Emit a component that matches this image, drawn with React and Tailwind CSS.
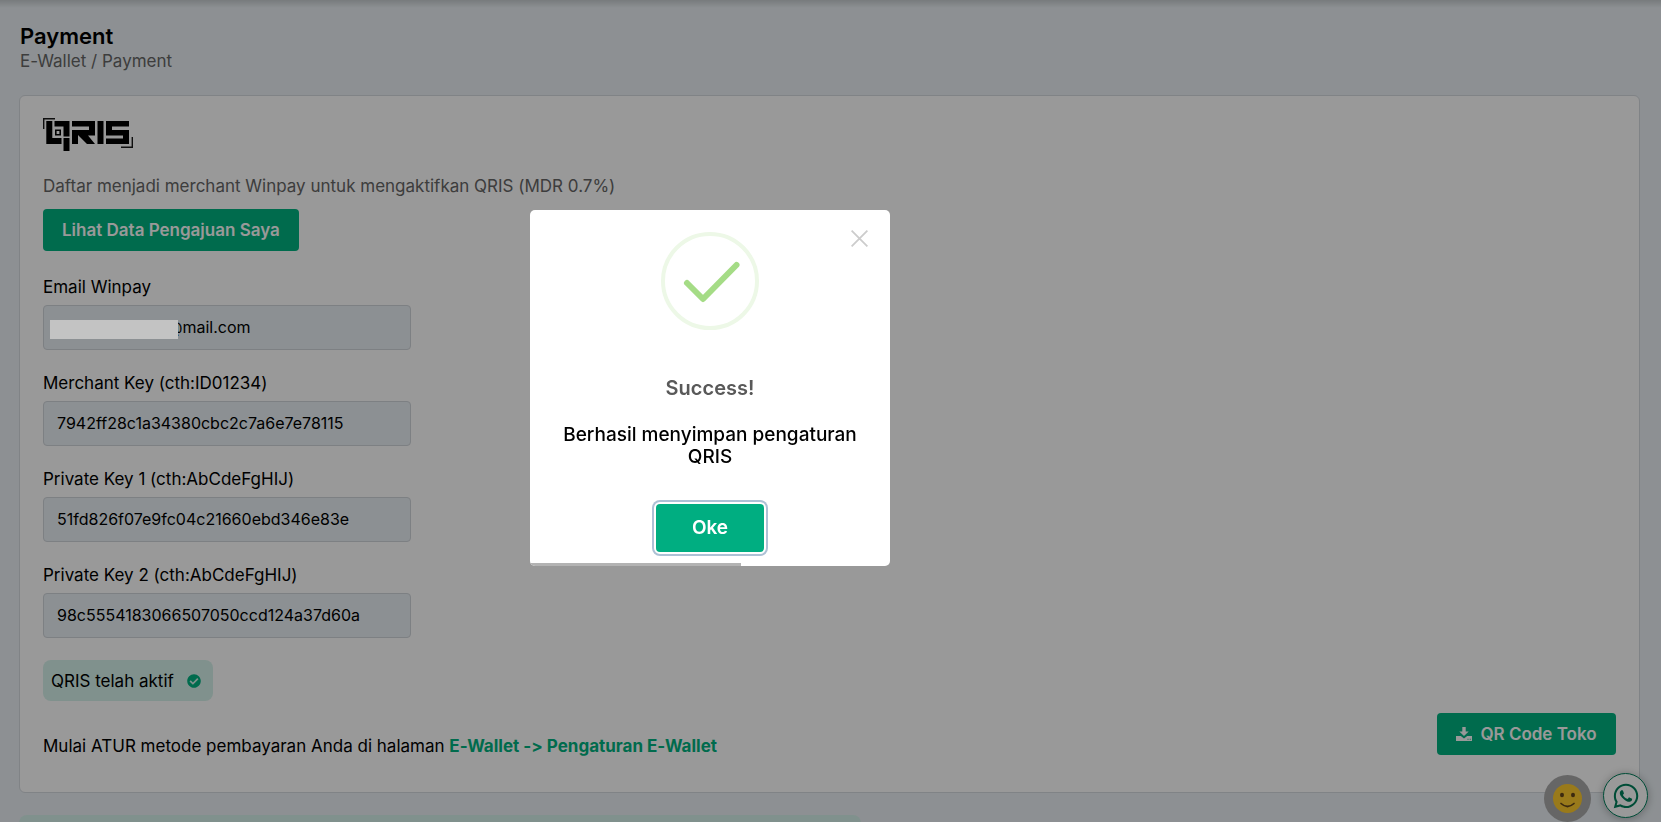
import React, { useState } from 'react';
import { FaCheckCircle, FaWhatsapp } from 'react-icons/fa';

const FIELDS = [
  { id: 'email', label: 'Email Winpay', value: '@mail.com' },
  { id: 'merchant', label: 'Merchant Key (cth:ID01234)', value: '7942ff28c1a34380cbc2c7a6e7e78115' },
  { id: 'key1', label: 'Private Key 1 (cth:AbCdeFgHIJ)', value: '51fd826f07e9fc04c21660ebd346e83e' },
  { id: 'key2', label: 'Private Key 2 (cth:AbCdeFgHIJ)', value: '98c5554183066507050ccd124a37d60a' },
];

const QrisLogo = () => (
  <svg width="90" height="34" viewBox="0 0 90 34" aria-label="QRIS" role="img">
    <path d="M.7 11V.7H12M78 29.300h11.300V19" fill="none" stroke="#1a1a1a" strokeWidth="1.4" />
    <path d="M3.300 3h6v17H18.500v6H3.300z" />
    <path d="M11.500 3h15v15.500h-6V8.500h-9z" />
    <path d="M20.500 20h6V33h-6z" />
    <path d="M12.800 12.300h4.400v4.400h-4.400z" fill="none" stroke="#000" strokeWidth="1.6" />
    <path d="M29 3h23v14.500h-7l7 8.500h-8l-9-9v9h-6V12h17V8.500H29z" />
    <path d="M54.500 3h6v23h-6z" />
    <path d="M63 3h23v5.500H69V12h17v14H63V20.500h17v-3H63z" />
  </svg>
);

const DownloadIcon = () => (
  <svg width="16" height="14" viewBox="0 0 16 14" fill="currentColor" aria-hidden="true">
    <path d="M6.300 0h3.400v4.500h3L8 9 3.300 4.500h3z" />
    <path d="M0 9h4.800L8 11.500 11.200 9H16v5H0zM11.500 11.700v1h1v-1zM13.700 11.700v1h1v-1z" fillRule="evenodd" />
  </svg>
);

const Smiley = () => (
  <svg width="29" height="29" viewBox="0 0 29 29" aria-hidden="true">
    <circle cx="14.500" cy="14.500" r="14.500" fill="#ffcb2e" />
    <ellipse cx="9" cy="11" rx="2" ry="2.200" fill="#65471b" />
    <ellipse cx="20" cy="11" rx="2" ry="2.200" fill="#65471b" />
    <path d="M8 19.500q6.500 6 13 0" fill="none" stroke="#65471b" strokeWidth="1.700" strokeLinecap="round" />
  </svg>
);

const SuccessModal = ({ onClose }) => (
  <div className="fixed inset-0 z-20 flex items-center justify-center bg-black/40 pr-[241px] pb-[46px]">
    <div role="dialog" aria-labelledby="modal-title" className="relative flex w-[360px] flex-col items-center overflow-hidden rounded-[5px] bg-white pt-[22px] pb-[14px]">
      <button type="button" aria-label="Close" onClick={onClose} className="absolute top-5 right-[22px]">
        <svg width="17" height="17" viewBox="0 0 17 17" stroke="#ccc" strokeWidth="1.800">
          <path d="M.6.6l15.800 15.800M16.400.6L.6 16.400" />
        </svg>
      </button>

      <svg width="98" height="98" viewBox="0 0 98 98" fill="none" aria-hidden="true">
        <circle cx="49" cy="49" r="47" stroke="#edf8e7" strokeWidth="4" />
        <path d="M26 51l16 16 33.500-34" stroke="#a5dc86" strokeWidth="6" strokeLinecap="round" strokeLinejoin="round" />
      </svg>

      <h2 id="modal-title" className="mt-11 text-xl leading-7 font-semibold text-[#595959]">Success!</h2>
      <p className="mt-[22px] px-5 text-center text-[19px] leading-[22px] font-medium text-black">
        Berhasil menyimpan pengaturan QRIS
      </p>
      <button
        type="button"
        onClick={onClose}
        className="mt-9 h-12 w-[108px] rounded bg-[#00ae81] text-[19px] font-semibold text-white shadow-[0_0_0_2px_#fff,0_0_0_4px_#adc1d5]"
      >
        Oke
      </button>

      <div className="absolute bottom-0 left-0 h-[3px] w-[211px] bg-[#b3b3b3]"></div>
    </div>
  </div>
);

const App = () => {
  const [showModal, setShowModal] = useState(true);

  return (
    <div className="h-screen overflow-hidden bg-[#ebf1f5] font-['Inter',sans-serif] text-[17px] leading-6 text-black [font-feature-settings:'calt'_0]">
      {/* Shadow of the top bar */}
      <div className="absolute inset-x-0 top-0 h-2 bg-linear-to-b from-black/15 to-transparent"></div>

      <main className="pt-6 pr-[21px] pl-[19px]">
        <div className="mb-[22px] px-px">
          <h1 className="text-[22px] leading-[25px] font-semibold">Payment</h1>
          <div className="text-[#666]">E-Wallet / Payment</div>
        </div>

        <section className="rounded-md border border-[#d5dadf] bg-white px-[23px] pt-[22px] pb-[34px]">
          <QrisLogo />
          <p className="mt-[22px] text-[#666]">
            Daftar menjadi merchant Winpay untuk mengaktifkan QRIS (MDR 0.7%)
          </p>
          <button type="button" className="mt-[11px] h-[42px] rounded bg-[#00b280] px-[19px] pb-px font-semibold text-white">
            Lihat Data Pengajuan Saya
          </button>

          <div className="mt-6 flex w-[368px] flex-col gap-[21px]">
            {FIELDS.map((field) => (
              <div key={field.id}>
                <label htmlFor={field.id} className="block">{field.label}</label>
                <input
                  id={field.id}
                  readOnly
                  defaultValue={field.value}
                  className={`mt-[6px] block h-[45px] w-full rounded border border-[#d0d5da] bg-[#e9f0f5] pb-px text-base ${field.id === 'email' ? 'pl-[123px]' : 'pl-[13px]'}`}
                />
              </div>
            ))}
          </div>

          <div className="mt-[22px] flex h-[41px] w-[170px] items-center justify-between rounded-lg bg-[#d5f2eb] pr-3 pl-2">
            QRIS telah aktif
            <FaCheckCircle className="h-[14px] w-[14px] text-[#00b280]" />
          </div>

          <div className="mt-3 flex items-start justify-between">
            <p className="mt-[21px]">
              Mulai ATUR metode pembayaran Anda di halaman{' '}
              <a href="#pengaturan" className="font-bold text-[#00b280]">E-Wallet -&gt; Pengaturan E-Wallet</a>
            </p>
            <button type="button" className="flex h-[42px] w-[179px] items-center justify-center gap-2 rounded bg-[#00b280] font-semibold text-white">
              <DownloadIcon />
              QR Code Toko
            </button>
          </div>
        </section>

        <div className="mt-[22px] h-20 w-[842px] rounded-lg bg-[#d5f2eb]"></div>
      </main>

      {/* Floating buttons */}
      <div className="fixed right-[13px] bottom-0 z-10 flex items-end gap-3">
        <button type="button" aria-label="Feedback" className="flex size-[47px] items-center justify-center rounded-full bg-[#aaa]">
          <Smiley />
        </button>
        <button type="button" aria-label="WhatsApp" className="mb-1 flex size-[45px] items-center justify-center rounded-full border border-[#00805c] bg-white text-[#00805c] shadow-[0_1px_8px_rgba(0,0,0,0.3)]">
          <FaWhatsapp className="size-7" />
        </button>
      </div>

      {showModal && <SuccessModal onClose={() => setShowModal(false)} />}

      {/* Hides the first part of the e-mail address */}
      <div className="absolute top-80 left-[50px] z-30 h-[19px] w-32 bg-[#c3c3c3]"></div>
    </div>
  );
};

export default App;
